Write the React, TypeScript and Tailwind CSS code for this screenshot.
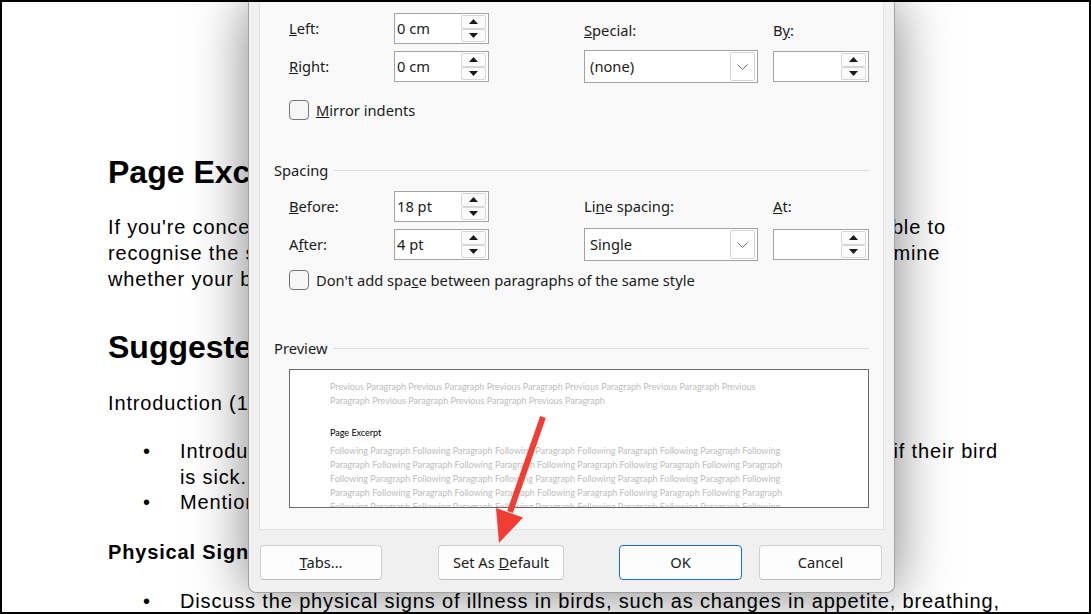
import type { ReactNode } from 'react'

const ui = "font-['Noto_Sans',sans-serif] text-[14.7px] text-[#1b1b1b]"

function Arrow({ down }: { down?: boolean }) {
  return (
    <svg width="9" height="5" viewBox="0 0 9 5" className={down ? 'rotate-180' : ''}>
      <path d="M0 5 L4.5 0 L9 5 Z" fill="#1a1a1a" />
    </svg>
  )
}

function SpinBox({ value, wide }: { value?: string; wide?: boolean }) {
  return (
    <div className={`flex h-[31px] items-stretch border border-[#a3a3a3] bg-white ${wide ? 'w-[96px]' : 'w-[95px]'}`}>
      <div className="flex flex-1 items-center pl-[2px]">{value}</div>
      <div className="mr-[2px] flex w-[25px] flex-col py-[1px]">
        <div className="flex flex-1 items-center justify-center rounded-[2px] border border-[#d6d6d6] bg-[#fbfbfb]">
          <Arrow />
        </div>
        <div className="flex flex-1 items-center justify-center rounded-[2px] border border-[#d6d6d6] bg-[#fbfbfb]">
          <Arrow down />
        </div>
      </div>
    </div>
  )
}

function Select({ value }: { value: string }) {
  return (
    <div className="flex h-[33px] w-[174px] items-center border border-[#a3a3a3] bg-white pl-[5px]">
      <span>{value}</span>
      <div className="ml-auto mr-[2px] flex h-[29px] w-[25px] items-center justify-center rounded-[2px] border border-[#d4d4d4] bg-white">
        <svg width="11" height="6" viewBox="0 0 11 6">
          <path d="M0.5 0.5 L5.5 5.5 L10.5 0.5" fill="none" stroke="#6f6f6f" strokeWidth="1" />
        </svg>
      </div>
    </div>
  )
}

function Checkbox({ children }: { children: ReactNode }) {
  return (
    <div className="flex h-[20px] items-center gap-[7px]">
      <div className="h-[20px] w-[20px] rounded-[4px] border border-[#767676] bg-[#f6f6f6]" />
      <span>{children}</span>
    </div>
  )
}

function SectionHeader({ title }: { title: string }) {
  return (
    <div className="flex h-[20px] items-center gap-[6px]">
      <span>{title}</span>
      <div className="h-px flex-1 bg-[#dcdcdc]" />
    </div>
  )
}

function Button({ children, primary, w }: { children: ReactNode; primary?: boolean; w: string }) {
  return (
    <div
      className={`flex h-[35px] items-center justify-center rounded-[4px] border bg-[#fdfdfd] ${w} ${
        primary ? 'border-[#1a6fc4]' : 'border-[#d0d0d0] border-b-[#bdbdbd]'
      }`}
    >
      {children}
    </div>
  )
}

const prev1 = 'Previous Paragraph Previous Paragraph Previous Paragraph Previous Paragraph Previous Paragraph Previous'
const prev2 = 'Paragraph Previous Paragraph Previous Paragraph Previous Paragraph'
const foll1 = 'Following Paragraph Following Paragraph Following Paragraph Following Paragraph Following Paragraph Following'
const foll2 = 'Paragraph Following Paragraph Following Paragraph Following Paragraph Following Paragraph Following Paragraph'

export default function App() {
  return (
    <div className="relative h-[614px] w-[1091px] overflow-hidden border-2 border-black bg-white">
      {/* Document behind the dialog */}
      <div className="pl-[106px] pt-[151.5px] font-['Liberation_Sans',Arial,sans-serif] text-black">
        <h1 className="text-[32px] font-bold leading-[37px]">Page Excerpt</h1>
        <div className="mt-[23.5px] text-[20px] leading-[26px] tracking-[0.85px]">
          <div className="whitespace-nowrap">If you're concerned about your feathered friend's health, it is so important to be able to</div>
          <div className="whitespace-nowrap">recognise the signs of illness early on. This article can help you to correctly determine</div>
          <div className="whitespace-nowrap">whether your bird is unwell and needs a vet.</div>
        </div>
        <h2 className="mt-[36.5px] text-[32px] font-bold leading-[37px]">Suggested Structure</h2>
        <p className="mt-[24.5px] text-[20px] leading-[26px] tracking-[0.85px]">Introduction (100 words)</p>
        <ul className="mt-[23px] text-[20px] leading-[25.5px] tracking-[0.85px]">
          <li className="flex">
            <span className="w-[72px] pl-[35px]">•</span>
            <span className="whitespace-nowrap">
              Introduce the topic and explain why it's important for bird owners to know if their bird
              <br />
              is sick.
            </span>
          </li>
          <li className="flex">
            <span className="w-[72px] pl-[35px]">•</span>
            <span className="whitespace-nowrap">Mention the most common signs of illness.</span>
          </li>
        </ul>
        <p className="mt-[23.5px] text-[20px] font-bold leading-[26px] tracking-[0.85px]">Physical Signs (300 words)</p>
        <ul className="mt-[23px] text-[20px] leading-[26px] tracking-[0.85px]">
          <li className="flex">
            <span className="w-[72px] pl-[35px]">•</span>
            <span className="whitespace-nowrap">Discuss the physical signs of illness in birds, such as changes in appetite, breathing,</span>
          </li>
        </ul>
      </div>

      {/* Paragraph dialog */}
      <div
        className={`absolute left-[246px] top-0 flex h-[591px] w-[647px] flex-col rounded-b-[8px] border-x border-b border-[#a3a3a3] bg-[#f0f0f0] shadow-[0_0_55px_rgba(0,0,0,0.5)] ${ui}`}
      >
        <div className="mx-[10px] h-[528px] border-x border-b border-[#e3e3e3] bg-[#f9f9f9] pl-[14px] pr-[14px] pt-[11px]">
          <div className="pl-[15px]">
            <div className="flex h-[31px] items-center">
              <span className="w-[105px]"><u>L</u>eft:</span>
              <SpinBox value="0 cm" />
              <span className="ml-[95px] w-[189px] pt-[3px]"><u>S</u>pecial:</span>
              <span className="pt-[3px]">B<u>y</u>:</span>
            </div>
            <div className="mt-[6px] flex h-[33px] items-center">
              <span className="w-[105px]"><u>R</u>ight:</span>
              <SpinBox value="0 cm" />
              <div className="ml-[95px]">
                <Select value="(none)" />
              </div>
              <div className="ml-[15px]">
                <SpinBox wide />
              </div>
            </div>
            <div className="mt-[17px]">
              <Checkbox>
                <u>M</u>irror indents
              </Checkbox>
            </div>
          </div>

          <div className="mt-[40px]">
            <SectionHeader title="Spacing" />
          </div>
          <div className="pl-[15px]">
            <div className="mt-[11px] flex h-[31px] items-center">
              <span className="w-[105px]"><u>B</u>efore:</span>
              <SpinBox value="18 pt" />
              <span className="ml-[95px] w-[189px]">Li<u>n</u>e spacing:</span>
              <span><u>A</u>t:</span>
            </div>
            <div className="mt-[6px] flex h-[33px] items-center">
              <span className="w-[105px]">A<u>f</u>ter:</span>
              <SpinBox value="4 pt" />
              <div className="ml-[95px]">
                <Select value="Single" />
              </div>
              <div className="ml-[15px]">
                <SpinBox wide />
              </div>
            </div>
            <div className="mt-[9px]">
              <Checkbox>
                Don't add spa<u>c</u>e between paragraphs of the same style
              </Checkbox>
            </div>
          </div>

          <div className="mt-[48px]">
            <SectionHeader title="Preview" />
          </div>
          <div className="ml-[15px] mt-[11px] h-[139px] overflow-hidden border border-[#6a6a6a] bg-white pl-[40px] pt-[10px] font-['Lato',sans-serif] text-[9px] leading-[14px] text-[#bdbdbd]">
            <div className="whitespace-nowrap">{prev1}</div>
            <div className="whitespace-nowrap">{prev2}</div>
            <div className="mt-[18px] whitespace-nowrap text-black">Page Excerpt</div>
            <div className="mt-[4px]">
              <div className="whitespace-nowrap">{foll1}</div>
              <div className="whitespace-nowrap">{foll2}</div>
              <div className="whitespace-nowrap">{foll1}</div>
              <div className="whitespace-nowrap">{foll2}</div>
              <div className="whitespace-nowrap">{foll1}</div>
            </div>
          </div>
        </div>

        <div className="mt-[15px] flex px-[11px]">
          <Button w="w-[122px]">
            <span><u>T</u>abs...</span>
          </Button>
          <div className="ml-[56px]">
            <Button w="w-[126px]">
              <span>Set As <u>D</u>efault</span>
            </Button>
          </div>
          <div className="ml-[55px]">
            <Button w="w-[123px]" primary>
              OK
            </Button>
          </div>
          <div className="ml-[17px]">
            <Button w="w-[123px]">Cancel</Button>
          </div>
        </div>
      </div>

      {/* Red annotation arrow */}
      <svg className="pointer-events-none absolute left-0 top-0" width="1087" height="610" viewBox="2 2 1087 610">
        <line x1="543" y1="417" x2="510" y2="512" stroke="#f23d35" strokeWidth="6" />
        <polygon points="499,543 496,508 523,517.5" fill="#f23d35" />
      </svg>
    </div>
  )
}
